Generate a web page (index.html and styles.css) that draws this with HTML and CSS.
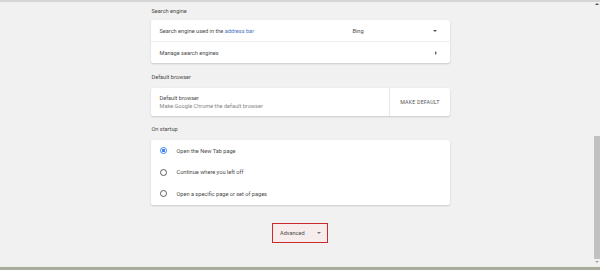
FILE: index.html
```html
<!DOCTYPE html>
<html lang="en">
<head>
  <meta charset="UTF-8" />
  <title>Settings</title>
  <link rel="stylesheet" href="styles.css">
</head>
<body>
  <div class="topbar"></div>

  <div class="content">
    <div class="section-title">Search engine</div>
    <div class="card">
      <div class="row">
        <span class="label">Search engine used in the <a class="link">address bar</a></span>
        <div class="select">
          <span>Bing</span>
          <span class="caret-down"></span>
        </div>
      </div>
      <div class="row divided">
        <span class="label">Manage search engines</span>
        <span class="caret-right"></span>
      </div>
    </div>

    <div class="section-title second">Default browser</div>
    <div class="card">
      <div class="row tall">
        <div class="label">
          <div>Default browser</div>
          <div class="secondary">Make Google Chrome the default browser</div>
        </div>
        <div class="action">MAKE DEFAULT</div>
      </div>
    </div>

    <div class="section-title third">On startup</div>
    <div class="card radios">
      <div class="radio-row"><span class="radio checked"></span>Open the New Tab page</div>
      <div class="radio-row"><span class="radio"></span>Continue where you left off</div>
      <div class="radio-row"><span class="radio"></span>Open a specific page or set of pages</div>
    </div>

    <div class="advanced">
      <span>Advanced</span>
      <span class="caret-down small"></span>
    </div>
  </div>

  <div class="bottombar"></div>

  <div class="scrollbar">
    <span class="arrow up"></span>
    <div class="thumb"></div>
    <span class="arrow down"></span>
  </div>
</body>
</html>
```

FILE: styles.css
```css
* {
  margin: 0;
  padding: 0;
  box-sizing: border-box;
}
html, body {
  width: 100%;
  height: 100%;
}
body {
  background: #f1f1f1;
  font-family: Roboto, 'Liberation Sans', sans-serif;
  font-size: 5.6px;
  color: #4a4a4a;
  display: flex;
  flex-direction: column;
  overflow: hidden;
  position: relative;
}

.topbar {
  height: 2px;
  background: #d6d6d6;
}

.content {
  width: 299px;
  margin: 0 auto;
}

.section-title {
  height: 18px;
  line-height: 18px;
  padding-left: 1px;
  color: #4a4a4a;
}
.section-title.second {
  height: 25px;
  padding-top: 5px;
}
.section-title.third {
  height: 24px;
  padding-top: 4px;
}

.card {
  background: #fff;
  border-radius: 2px;
  box-shadow: 0 1px 2px rgba(0, 0, 0, 0.16), 0 0 1px rgba(0, 0, 0, 0.06);
}

.row {
  height: 21px;
  display: flex;
  align-items: center;
  padding: 0 13px 0 9px;
}
.row.divided {
  height: 22px;
  border-top: 1px solid #efefef;
}
.row.tall {
  height: 28px;
  padding-right: 0;
}
.row .label {
  flex: 1;
  line-height: 8px;
}
.link {
  color: #4a72c4;
}
.secondary {
  color: #858585;
}

.select {
  width: 84px;
  display: flex;
  align-items: center;
  justify-content: space-between;
}

.caret-down {
  width: 0;
  height: 0;
  border-left: 2.5px solid transparent;
  border-right: 2.5px solid transparent;
  border-top: 2.5px solid #555;
}
.caret-down.small {
  border-left-width: 2px;
  border-right-width: 2px;
  border-top-width: 2px;
  border-top-color: #777;
}
.caret-right {
  width: 0;
  height: 0;
  border-top: 2px solid transparent;
  border-bottom: 2px solid transparent;
  border-left: 2px solid #666;
}

.action {
  height: 100%;
  display: flex;
  align-items: center;
  padding: 0 10px 0 10px;
  border-left: 1px solid #e8e8e8;
  color: #555;
  font-size: 5.3px;
  letter-spacing: 0.2px;
}

.radio-row {
  height: 21.5px;
  display: flex;
  align-items: center;
  padding-left: 9px;
}
.radio {
  width: 7px;
  height: 7px;
  border: 1px solid #5a5a5a;
  border-radius: 50%;
  margin-right: 10px;
}
.radio.checked {
  border-color: #4285f4;
  background: radial-gradient(circle, #4285f4 0 1.6px, #fff 2px);
}

.advanced {
  width: 56px;
  height: 20px;
  margin: 18px auto 0;
  border: 1px solid #c92b2b;
  background: #f7eded;
  display: flex;
  align-items: center;
  gap: 12px;
  padding-left: 7px;
  color: #4a4a4a;
}

.bottombar {
  margin-top: auto;
  height: 4px;
  border-top: 1px solid #e6f2e2;
  background: #a9ab9f;
}

.scrollbar {
  position: absolute;
  top: 2px;
  right: 0;
  width: 7px;
  height: 265px;
  display: flex;
  flex-direction: column;
  align-items: center;
}
.scrollbar .thumb {
  width: 6px;
  height: 123px;
  margin-top: 131px;
  background: #c1c1c1;
}
.arrow {
  width: 0;
  height: 0;
  border-left: 2px solid transparent;
  border-right: 2px solid transparent;
  margin-top: 1px;
}
.arrow.up {
  border-bottom: 2px solid #555;
}
.arrow.down {
  border-top: 2px solid #a3a3a3;
  margin-top: 2px;
}
```
